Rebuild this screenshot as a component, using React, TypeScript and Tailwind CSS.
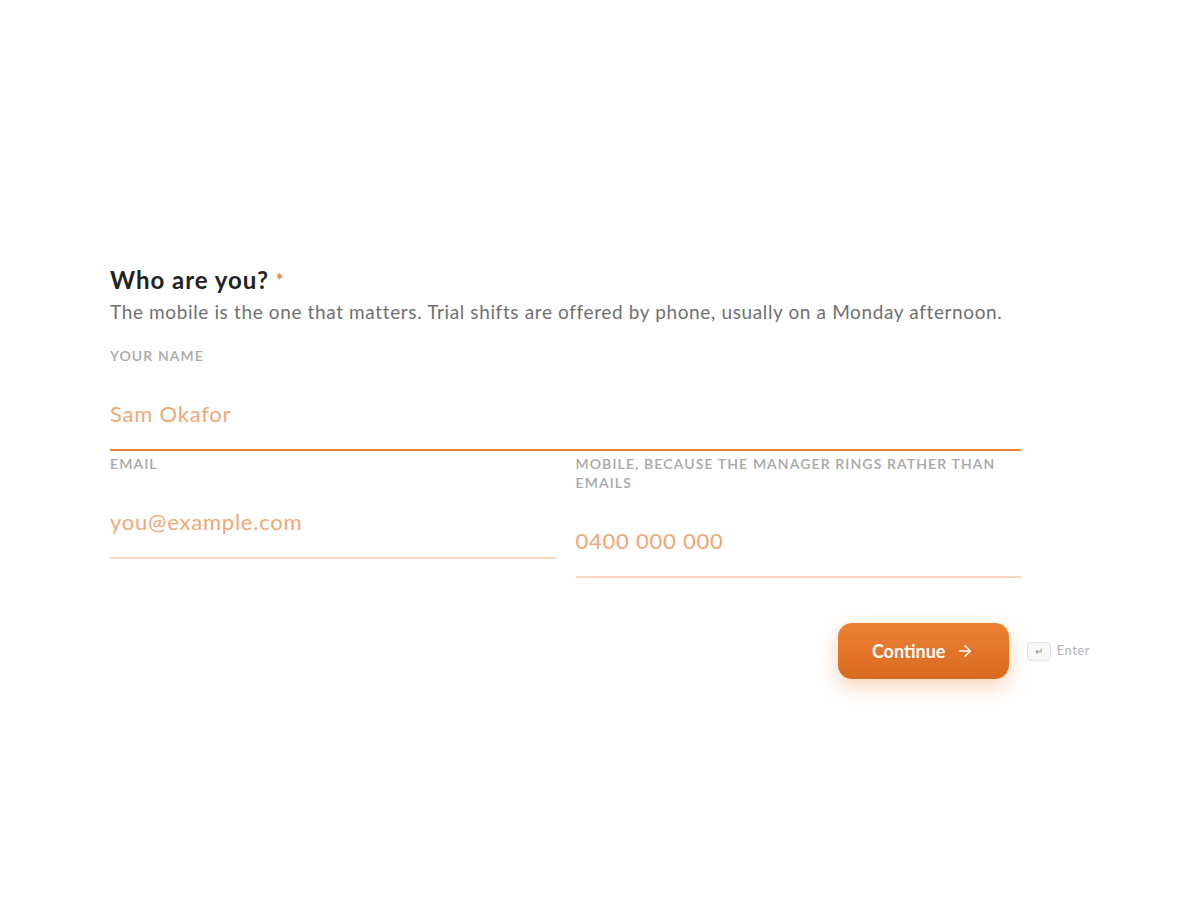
import { useState } from 'react';

const font = { fontFamily: 'Lato, "Open Sans", sans-serif' };

const Field = ({
  label,
  placeholder,
  value,
  onChange,
  focused,
  type = 'text',
}: {
  label: string;
  placeholder: string;
  value: string;
  onChange: (v: string) => void;
  focused?: boolean;
  type?: string;
}) => (
  <label className="flex flex-col">
    <span className="text-[14px] leading-[19px] font-semibold uppercase tracking-[0.08em] text-[#a8a8a8]">
      {label}
    </span>
    <input
      type={type}
      value={value}
      onChange={(e) => onChange(e.target.value)}
      placeholder={placeholder}
      className={`mt-[9px] h-[77px] pt-[24px] pb-[21px] w-full bg-transparent outline-none text-[22px] leading-[30px] tracking-[0.035em] text-[#333] placeholder:text-[#efa775] border-b-2 ${
        focused ? 'border-[#e8843c]' : 'border-[#f9d6bd]'
      }`}
      style={font}
    />
  </label>
);

export default function App() {
  const [name, setName] = useState('');
  const [email, setEmail] = useState('');
  const [mobile, setMobile] = useState('');

  return (
    <div className="min-h-[900px] bg-white" style={font}>
      <div className="w-[980px] mx-auto pt-[264px]">
        <div className="w-[911px]">
          <h1 className="text-[24px] leading-[32px] font-bold text-[#222] tracking-[0.04em]">
            Who are you? <span className="text-[#e8843c] text-[18px] align-top">*</span>
          </h1>
          <p className="mt-[2px] text-[19px] leading-[28px] text-[#707070] tracking-[0.033em]">
            The mobile is the one that matters. Trial shifts are offered by phone, usually on a Monday afternoon.
          </p>
          <div className="mt-[20px]">
            <Field label="Your name" placeholder="Sam Okafor" value={name} onChange={setName} focused />
          </div>
          <div className="grid grid-cols-2 gap-x-[20px] mt-[3px] items-start">
            <Field label="Email" placeholder="you@example.com" value={email} onChange={setEmail} type="email" />
            <Field
              label="Mobile, because the manager rings rather than emails"
              placeholder="0400 000 000"
              value={mobile}
              onChange={setMobile}
              type="tel"
            />
          </div>
        </div>
        <div className="flex justify-end items-center mt-[45px]">
          <button className="h-[56px] w-[171px] rounded-[14px] bg-gradient-to-b from-[#ec8133] to-[#d96a22] text-white text-[18px] font-bold flex items-center justify-center gap-[11px] shadow-[0_8px_20px_rgba(232,128,52,0.35)]">
            Continue
            <svg width="18" height="18" viewBox="0 0 24 24" fill="none" stroke="currentColor" strokeWidth="2.2" strokeLinecap="round" strokeLinejoin="round">
              <path d="M5 12h14" />
              <path d="m12 5 7 7-7 7" />
            </svg>
          </button>
          <div className="flex items-center ml-[18px] gap-[6px]">
            <span className="w-[24px] h-[19px] rounded-[4px] border border-[#e2e2e2] bg-[#f7f7f7] text-[10px] leading-none text-[#888] flex items-center justify-center">
              ↵
            </span>
            <span className="text-[13px] text-[#b3b3b3] tracking-[0.04em]">Enter</span>
          </div>
        </div>
      </div>
    </div>
  );
}
